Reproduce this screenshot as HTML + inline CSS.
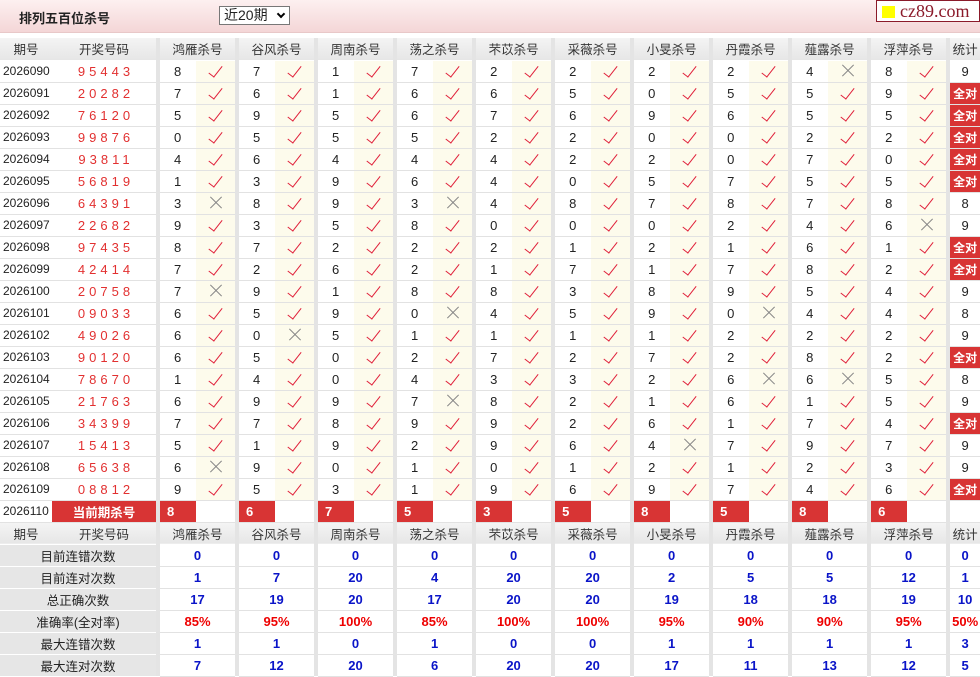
<!DOCTYPE html>
<html><head><meta charset="utf-8"><style>
*{margin:0;padding:0;box-sizing:border-box}
body{width:980px;height:675px;overflow:hidden;background:#fff;font-family:"Liberation Sans","Noto Sans CJK SC",sans-serif;color:#222;position:relative}
.top{position:absolute;left:0;top:0;width:980px;height:33px;background:linear-gradient(#fdf0f0,#f4d6d7);border-bottom:1px solid #e8c8c8}
.tt{position:absolute;left:19px;top:8px;font-size:13px;font-weight:bold;color:#222}
.sel{position:absolute;left:219px;top:6px;width:71px;height:19px;border:1px solid #777;background:#fff;font-size:14px;line-height:17px;padding-left:4px}
.sel b{position:absolute;right:5px;top:4px;width:6px;height:6px;border-right:2px solid #000;border-bottom:2px solid #000;transform:rotate(45deg)}
.logo{position:absolute;left:876px;top:0;width:104px;height:22px;border:1px solid #8b1a2a;background:#fff;font-family:"Liberation Serif",serif;color:#8b1a2a;font-size:18px;line-height:20px;padding-left:23px}
.logo:before{content:"";position:absolute;left:5px;top:5px;width:13px;height:12px;background:#ff0}
table{position:absolute;left:0;top:38px;border-collapse:collapse;table-layout:fixed;width:980px}
td{height:22px;border-bottom:1px solid #e2e2e2;font-size:12px;text-align:center;padding:0;white-space:nowrap;overflow:hidden}
tr.h td{background:linear-gradient(#f4f4f4,#e6e6e6);font-size:12.5px;color:#333;border-bottom:1px solid #fff}
td.g,tr.h td.g{background:#e4e4e4;border-bottom:none}
td.p{text-align:left;padding-left:3px}
td.r{color:#e23030;letter-spacing:4px;font-size:13px;padding-left:4px}
td.n{text-align:left;padding-left:14px;font-size:13px}
td.c{background:#fdfbec}
td.t{font-size:13px}
td.a{background:#d83434;color:#fff;font-weight:bold}
td.rn{background:#d83434;color:#fff;font-weight:bold;font-size:13px;text-align:left;padding-left:7px}
td.L{background:#e6e6e6;color:#222;font-size:12.5px;border-bottom:1px solid #fff}
td.v{color:#0a14c8;font-weight:bold;font-size:13px}
td.q{color:#e00;font-weight:bold;font-size:13px}
i.y{display:inline-block;width:7px;height:14px;border-right:1.7px solid #e0203a;border-bottom:1.7px solid #e0203a;transform:rotate(38deg);margin-top:-3px;vertical-align:middle}
i.x{display:inline-block;position:relative;width:14px;height:14px;vertical-align:middle}
i.x:before,i.x:after{content:"";position:absolute;left:-1px;top:6px;width:16px;height:1px;background:#888;transform:rotate(45deg)}
i.x:after{transform:rotate(-45deg)}
</style></head><body>
<div class="top"><div class="tt">排列五百位杀号</div><div class="sel">近20期<b></b></div><div class="logo">cz89.com</div></div>
<table>
<colgroup><col style="width:52px"><col style="width:104px"><col style="width:4px">
<col style="width:36px"><col style="width:39px"><col style="width:4px"><col style="width:36px"><col style="width:39px"><col style="width:4px">
<col style="width:36px"><col style="width:39px"><col style="width:4px"><col style="width:36px"><col style="width:39px"><col style="width:4px">
<col style="width:36px"><col style="width:39px"><col style="width:4px"><col style="width:36px"><col style="width:39px"><col style="width:4px">
<col style="width:36px"><col style="width:39px"><col style="width:4px"><col style="width:36px"><col style="width:39px"><col style="width:4px">
<col style="width:36px"><col style="width:39px"><col style="width:4px"><col style="width:36px"><col style="width:39px"><col style="width:4px">
<col style="width:30px"></colgroup>
<tr class="h"><td>期号</td><td>开奖号码</td><td class="g"></td><td colspan="2">鸿雁杀号</td><td class="g"></td><td colspan="2">谷风杀号</td><td class="g"></td><td colspan="2">周南杀号</td><td class="g"></td><td colspan="2">荡之杀号</td><td class="g"></td><td colspan="2">芣苡杀号</td><td class="g"></td><td colspan="2">采薇杀号</td><td class="g"></td><td colspan="2">小旻杀号</td><td class="g"></td><td colspan="2">丹霞杀号</td><td class="g"></td><td colspan="2">薤露杀号</td><td class="g"></td><td colspan="2">浮萍杀号</td><td class="g"></td><td>统计</td></tr>
<tr><td class="p">2026090</td><td class="r">95443</td><td class="g"></td><td class="n">8</td><td class="c"><i class="y"></i></td><td class="g"></td><td class="n">7</td><td class="c"><i class="y"></i></td><td class="g"></td><td class="n">1</td><td class="c"><i class="y"></i></td><td class="g"></td><td class="n">7</td><td class="c"><i class="y"></i></td><td class="g"></td><td class="n">2</td><td class="c"><i class="y"></i></td><td class="g"></td><td class="n">2</td><td class="c"><i class="y"></i></td><td class="g"></td><td class="n">2</td><td class="c"><i class="y"></i></td><td class="g"></td><td class="n">2</td><td class="c"><i class="y"></i></td><td class="g"></td><td class="n">4</td><td class="c"><i class="x"></i></td><td class="g"></td><td class="n">8</td><td class="c"><i class="y"></i></td><td class="g"></td><td class="t">9</td></tr>
<tr><td class="p">2026091</td><td class="r">20282</td><td class="g"></td><td class="n">7</td><td class="c"><i class="y"></i></td><td class="g"></td><td class="n">6</td><td class="c"><i class="y"></i></td><td class="g"></td><td class="n">1</td><td class="c"><i class="y"></i></td><td class="g"></td><td class="n">6</td><td class="c"><i class="y"></i></td><td class="g"></td><td class="n">6</td><td class="c"><i class="y"></i></td><td class="g"></td><td class="n">5</td><td class="c"><i class="y"></i></td><td class="g"></td><td class="n">0</td><td class="c"><i class="y"></i></td><td class="g"></td><td class="n">5</td><td class="c"><i class="y"></i></td><td class="g"></td><td class="n">5</td><td class="c"><i class="y"></i></td><td class="g"></td><td class="n">9</td><td class="c"><i class="y"></i></td><td class="g"></td><td class="a">全对</td></tr>
<tr><td class="p">2026092</td><td class="r">76120</td><td class="g"></td><td class="n">5</td><td class="c"><i class="y"></i></td><td class="g"></td><td class="n">9</td><td class="c"><i class="y"></i></td><td class="g"></td><td class="n">5</td><td class="c"><i class="y"></i></td><td class="g"></td><td class="n">6</td><td class="c"><i class="y"></i></td><td class="g"></td><td class="n">7</td><td class="c"><i class="y"></i></td><td class="g"></td><td class="n">6</td><td class="c"><i class="y"></i></td><td class="g"></td><td class="n">9</td><td class="c"><i class="y"></i></td><td class="g"></td><td class="n">6</td><td class="c"><i class="y"></i></td><td class="g"></td><td class="n">5</td><td class="c"><i class="y"></i></td><td class="g"></td><td class="n">5</td><td class="c"><i class="y"></i></td><td class="g"></td><td class="a">全对</td></tr>
<tr><td class="p">2026093</td><td class="r">99876</td><td class="g"></td><td class="n">0</td><td class="c"><i class="y"></i></td><td class="g"></td><td class="n">5</td><td class="c"><i class="y"></i></td><td class="g"></td><td class="n">5</td><td class="c"><i class="y"></i></td><td class="g"></td><td class="n">5</td><td class="c"><i class="y"></i></td><td class="g"></td><td class="n">2</td><td class="c"><i class="y"></i></td><td class="g"></td><td class="n">2</td><td class="c"><i class="y"></i></td><td class="g"></td><td class="n">0</td><td class="c"><i class="y"></i></td><td class="g"></td><td class="n">0</td><td class="c"><i class="y"></i></td><td class="g"></td><td class="n">2</td><td class="c"><i class="y"></i></td><td class="g"></td><td class="n">2</td><td class="c"><i class="y"></i></td><td class="g"></td><td class="a">全对</td></tr>
<tr><td class="p">2026094</td><td class="r">93811</td><td class="g"></td><td class="n">4</td><td class="c"><i class="y"></i></td><td class="g"></td><td class="n">6</td><td class="c"><i class="y"></i></td><td class="g"></td><td class="n">4</td><td class="c"><i class="y"></i></td><td class="g"></td><td class="n">4</td><td class="c"><i class="y"></i></td><td class="g"></td><td class="n">4</td><td class="c"><i class="y"></i></td><td class="g"></td><td class="n">2</td><td class="c"><i class="y"></i></td><td class="g"></td><td class="n">2</td><td class="c"><i class="y"></i></td><td class="g"></td><td class="n">0</td><td class="c"><i class="y"></i></td><td class="g"></td><td class="n">7</td><td class="c"><i class="y"></i></td><td class="g"></td><td class="n">0</td><td class="c"><i class="y"></i></td><td class="g"></td><td class="a">全对</td></tr>
<tr><td class="p">2026095</td><td class="r">56819</td><td class="g"></td><td class="n">1</td><td class="c"><i class="y"></i></td><td class="g"></td><td class="n">3</td><td class="c"><i class="y"></i></td><td class="g"></td><td class="n">9</td><td class="c"><i class="y"></i></td><td class="g"></td><td class="n">6</td><td class="c"><i class="y"></i></td><td class="g"></td><td class="n">4</td><td class="c"><i class="y"></i></td><td class="g"></td><td class="n">0</td><td class="c"><i class="y"></i></td><td class="g"></td><td class="n">5</td><td class="c"><i class="y"></i></td><td class="g"></td><td class="n">7</td><td class="c"><i class="y"></i></td><td class="g"></td><td class="n">5</td><td class="c"><i class="y"></i></td><td class="g"></td><td class="n">5</td><td class="c"><i class="y"></i></td><td class="g"></td><td class="a">全对</td></tr>
<tr><td class="p">2026096</td><td class="r">64391</td><td class="g"></td><td class="n">3</td><td class="c"><i class="x"></i></td><td class="g"></td><td class="n">8</td><td class="c"><i class="y"></i></td><td class="g"></td><td class="n">9</td><td class="c"><i class="y"></i></td><td class="g"></td><td class="n">3</td><td class="c"><i class="x"></i></td><td class="g"></td><td class="n">4</td><td class="c"><i class="y"></i></td><td class="g"></td><td class="n">8</td><td class="c"><i class="y"></i></td><td class="g"></td><td class="n">7</td><td class="c"><i class="y"></i></td><td class="g"></td><td class="n">8</td><td class="c"><i class="y"></i></td><td class="g"></td><td class="n">7</td><td class="c"><i class="y"></i></td><td class="g"></td><td class="n">8</td><td class="c"><i class="y"></i></td><td class="g"></td><td class="t">8</td></tr>
<tr><td class="p">2026097</td><td class="r">22682</td><td class="g"></td><td class="n">9</td><td class="c"><i class="y"></i></td><td class="g"></td><td class="n">3</td><td class="c"><i class="y"></i></td><td class="g"></td><td class="n">5</td><td class="c"><i class="y"></i></td><td class="g"></td><td class="n">8</td><td class="c"><i class="y"></i></td><td class="g"></td><td class="n">0</td><td class="c"><i class="y"></i></td><td class="g"></td><td class="n">0</td><td class="c"><i class="y"></i></td><td class="g"></td><td class="n">0</td><td class="c"><i class="y"></i></td><td class="g"></td><td class="n">2</td><td class="c"><i class="y"></i></td><td class="g"></td><td class="n">4</td><td class="c"><i class="y"></i></td><td class="g"></td><td class="n">6</td><td class="c"><i class="x"></i></td><td class="g"></td><td class="t">9</td></tr>
<tr><td class="p">2026098</td><td class="r">97435</td><td class="g"></td><td class="n">8</td><td class="c"><i class="y"></i></td><td class="g"></td><td class="n">7</td><td class="c"><i class="y"></i></td><td class="g"></td><td class="n">2</td><td class="c"><i class="y"></i></td><td class="g"></td><td class="n">2</td><td class="c"><i class="y"></i></td><td class="g"></td><td class="n">2</td><td class="c"><i class="y"></i></td><td class="g"></td><td class="n">1</td><td class="c"><i class="y"></i></td><td class="g"></td><td class="n">2</td><td class="c"><i class="y"></i></td><td class="g"></td><td class="n">1</td><td class="c"><i class="y"></i></td><td class="g"></td><td class="n">6</td><td class="c"><i class="y"></i></td><td class="g"></td><td class="n">1</td><td class="c"><i class="y"></i></td><td class="g"></td><td class="a">全对</td></tr>
<tr><td class="p">2026099</td><td class="r">42414</td><td class="g"></td><td class="n">7</td><td class="c"><i class="y"></i></td><td class="g"></td><td class="n">2</td><td class="c"><i class="y"></i></td><td class="g"></td><td class="n">6</td><td class="c"><i class="y"></i></td><td class="g"></td><td class="n">2</td><td class="c"><i class="y"></i></td><td class="g"></td><td class="n">1</td><td class="c"><i class="y"></i></td><td class="g"></td><td class="n">7</td><td class="c"><i class="y"></i></td><td class="g"></td><td class="n">1</td><td class="c"><i class="y"></i></td><td class="g"></td><td class="n">7</td><td class="c"><i class="y"></i></td><td class="g"></td><td class="n">8</td><td class="c"><i class="y"></i></td><td class="g"></td><td class="n">2</td><td class="c"><i class="y"></i></td><td class="g"></td><td class="a">全对</td></tr>
<tr><td class="p">2026100</td><td class="r">20758</td><td class="g"></td><td class="n">7</td><td class="c"><i class="x"></i></td><td class="g"></td><td class="n">9</td><td class="c"><i class="y"></i></td><td class="g"></td><td class="n">1</td><td class="c"><i class="y"></i></td><td class="g"></td><td class="n">8</td><td class="c"><i class="y"></i></td><td class="g"></td><td class="n">8</td><td class="c"><i class="y"></i></td><td class="g"></td><td class="n">3</td><td class="c"><i class="y"></i></td><td class="g"></td><td class="n">8</td><td class="c"><i class="y"></i></td><td class="g"></td><td class="n">9</td><td class="c"><i class="y"></i></td><td class="g"></td><td class="n">5</td><td class="c"><i class="y"></i></td><td class="g"></td><td class="n">4</td><td class="c"><i class="y"></i></td><td class="g"></td><td class="t">9</td></tr>
<tr><td class="p">2026101</td><td class="r">09033</td><td class="g"></td><td class="n">6</td><td class="c"><i class="y"></i></td><td class="g"></td><td class="n">5</td><td class="c"><i class="y"></i></td><td class="g"></td><td class="n">9</td><td class="c"><i class="y"></i></td><td class="g"></td><td class="n">0</td><td class="c"><i class="x"></i></td><td class="g"></td><td class="n">4</td><td class="c"><i class="y"></i></td><td class="g"></td><td class="n">5</td><td class="c"><i class="y"></i></td><td class="g"></td><td class="n">9</td><td class="c"><i class="y"></i></td><td class="g"></td><td class="n">0</td><td class="c"><i class="x"></i></td><td class="g"></td><td class="n">4</td><td class="c"><i class="y"></i></td><td class="g"></td><td class="n">4</td><td class="c"><i class="y"></i></td><td class="g"></td><td class="t">8</td></tr>
<tr><td class="p">2026102</td><td class="r">49026</td><td class="g"></td><td class="n">6</td><td class="c"><i class="y"></i></td><td class="g"></td><td class="n">0</td><td class="c"><i class="x"></i></td><td class="g"></td><td class="n">5</td><td class="c"><i class="y"></i></td><td class="g"></td><td class="n">1</td><td class="c"><i class="y"></i></td><td class="g"></td><td class="n">1</td><td class="c"><i class="y"></i></td><td class="g"></td><td class="n">1</td><td class="c"><i class="y"></i></td><td class="g"></td><td class="n">1</td><td class="c"><i class="y"></i></td><td class="g"></td><td class="n">2</td><td class="c"><i class="y"></i></td><td class="g"></td><td class="n">2</td><td class="c"><i class="y"></i></td><td class="g"></td><td class="n">2</td><td class="c"><i class="y"></i></td><td class="g"></td><td class="t">9</td></tr>
<tr><td class="p">2026103</td><td class="r">90120</td><td class="g"></td><td class="n">6</td><td class="c"><i class="y"></i></td><td class="g"></td><td class="n">5</td><td class="c"><i class="y"></i></td><td class="g"></td><td class="n">0</td><td class="c"><i class="y"></i></td><td class="g"></td><td class="n">2</td><td class="c"><i class="y"></i></td><td class="g"></td><td class="n">7</td><td class="c"><i class="y"></i></td><td class="g"></td><td class="n">2</td><td class="c"><i class="y"></i></td><td class="g"></td><td class="n">7</td><td class="c"><i class="y"></i></td><td class="g"></td><td class="n">2</td><td class="c"><i class="y"></i></td><td class="g"></td><td class="n">8</td><td class="c"><i class="y"></i></td><td class="g"></td><td class="n">2</td><td class="c"><i class="y"></i></td><td class="g"></td><td class="a">全对</td></tr>
<tr><td class="p">2026104</td><td class="r">78670</td><td class="g"></td><td class="n">1</td><td class="c"><i class="y"></i></td><td class="g"></td><td class="n">4</td><td class="c"><i class="y"></i></td><td class="g"></td><td class="n">0</td><td class="c"><i class="y"></i></td><td class="g"></td><td class="n">4</td><td class="c"><i class="y"></i></td><td class="g"></td><td class="n">3</td><td class="c"><i class="y"></i></td><td class="g"></td><td class="n">3</td><td class="c"><i class="y"></i></td><td class="g"></td><td class="n">2</td><td class="c"><i class="y"></i></td><td class="g"></td><td class="n">6</td><td class="c"><i class="x"></i></td><td class="g"></td><td class="n">6</td><td class="c"><i class="x"></i></td><td class="g"></td><td class="n">5</td><td class="c"><i class="y"></i></td><td class="g"></td><td class="t">8</td></tr>
<tr><td class="p">2026105</td><td class="r">21763</td><td class="g"></td><td class="n">6</td><td class="c"><i class="y"></i></td><td class="g"></td><td class="n">9</td><td class="c"><i class="y"></i></td><td class="g"></td><td class="n">9</td><td class="c"><i class="y"></i></td><td class="g"></td><td class="n">7</td><td class="c"><i class="x"></i></td><td class="g"></td><td class="n">8</td><td class="c"><i class="y"></i></td><td class="g"></td><td class="n">2</td><td class="c"><i class="y"></i></td><td class="g"></td><td class="n">1</td><td class="c"><i class="y"></i></td><td class="g"></td><td class="n">6</td><td class="c"><i class="y"></i></td><td class="g"></td><td class="n">1</td><td class="c"><i class="y"></i></td><td class="g"></td><td class="n">5</td><td class="c"><i class="y"></i></td><td class="g"></td><td class="t">9</td></tr>
<tr><td class="p">2026106</td><td class="r">34399</td><td class="g"></td><td class="n">7</td><td class="c"><i class="y"></i></td><td class="g"></td><td class="n">7</td><td class="c"><i class="y"></i></td><td class="g"></td><td class="n">8</td><td class="c"><i class="y"></i></td><td class="g"></td><td class="n">9</td><td class="c"><i class="y"></i></td><td class="g"></td><td class="n">9</td><td class="c"><i class="y"></i></td><td class="g"></td><td class="n">2</td><td class="c"><i class="y"></i></td><td class="g"></td><td class="n">6</td><td class="c"><i class="y"></i></td><td class="g"></td><td class="n">1</td><td class="c"><i class="y"></i></td><td class="g"></td><td class="n">7</td><td class="c"><i class="y"></i></td><td class="g"></td><td class="n">4</td><td class="c"><i class="y"></i></td><td class="g"></td><td class="a">全对</td></tr>
<tr><td class="p">2026107</td><td class="r">15413</td><td class="g"></td><td class="n">5</td><td class="c"><i class="y"></i></td><td class="g"></td><td class="n">1</td><td class="c"><i class="y"></i></td><td class="g"></td><td class="n">9</td><td class="c"><i class="y"></i></td><td class="g"></td><td class="n">2</td><td class="c"><i class="y"></i></td><td class="g"></td><td class="n">9</td><td class="c"><i class="y"></i></td><td class="g"></td><td class="n">6</td><td class="c"><i class="y"></i></td><td class="g"></td><td class="n">4</td><td class="c"><i class="x"></i></td><td class="g"></td><td class="n">7</td><td class="c"><i class="y"></i></td><td class="g"></td><td class="n">9</td><td class="c"><i class="y"></i></td><td class="g"></td><td class="n">7</td><td class="c"><i class="y"></i></td><td class="g"></td><td class="t">9</td></tr>
<tr><td class="p">2026108</td><td class="r">65638</td><td class="g"></td><td class="n">6</td><td class="c"><i class="x"></i></td><td class="g"></td><td class="n">9</td><td class="c"><i class="y"></i></td><td class="g"></td><td class="n">0</td><td class="c"><i class="y"></i></td><td class="g"></td><td class="n">1</td><td class="c"><i class="y"></i></td><td class="g"></td><td class="n">0</td><td class="c"><i class="y"></i></td><td class="g"></td><td class="n">1</td><td class="c"><i class="y"></i></td><td class="g"></td><td class="n">2</td><td class="c"><i class="y"></i></td><td class="g"></td><td class="n">1</td><td class="c"><i class="y"></i></td><td class="g"></td><td class="n">2</td><td class="c"><i class="y"></i></td><td class="g"></td><td class="n">3</td><td class="c"><i class="y"></i></td><td class="g"></td><td class="t">9</td></tr>
<tr><td class="p">2026109</td><td class="r">08812</td><td class="g"></td><td class="n">9</td><td class="c"><i class="y"></i></td><td class="g"></td><td class="n">5</td><td class="c"><i class="y"></i></td><td class="g"></td><td class="n">3</td><td class="c"><i class="y"></i></td><td class="g"></td><td class="n">1</td><td class="c"><i class="y"></i></td><td class="g"></td><td class="n">9</td><td class="c"><i class="y"></i></td><td class="g"></td><td class="n">6</td><td class="c"><i class="y"></i></td><td class="g"></td><td class="n">9</td><td class="c"><i class="y"></i></td><td class="g"></td><td class="n">7</td><td class="c"><i class="y"></i></td><td class="g"></td><td class="n">4</td><td class="c"><i class="y"></i></td><td class="g"></td><td class="n">6</td><td class="c"><i class="y"></i></td><td class="g"></td><td class="a">全对</td></tr>
<tr><td class="p">2026110</td><td class="a" style="font-size:12.5px">当前期杀号</td><td class="g"></td><td class="rn">8</td><td></td><td class="g"></td><td class="rn">6</td><td></td><td class="g"></td><td class="rn">7</td><td></td><td class="g"></td><td class="rn">5</td><td></td><td class="g"></td><td class="rn">3</td><td></td><td class="g"></td><td class="rn">5</td><td></td><td class="g"></td><td class="rn">8</td><td></td><td class="g"></td><td class="rn">5</td><td></td><td class="g"></td><td class="rn">8</td><td></td><td class="g"></td><td class="rn">6</td><td></td><td class="g"></td><td></td></tr>
<tr class="h"><td>期号</td><td>开奖号码</td><td class="g"></td><td colspan="2">鸿雁杀号</td><td class="g"></td><td colspan="2">谷风杀号</td><td class="g"></td><td colspan="2">周南杀号</td><td class="g"></td><td colspan="2">荡之杀号</td><td class="g"></td><td colspan="2">芣苡杀号</td><td class="g"></td><td colspan="2">采薇杀号</td><td class="g"></td><td colspan="2">小旻杀号</td><td class="g"></td><td colspan="2">丹霞杀号</td><td class="g"></td><td colspan="2">薤露杀号</td><td class="g"></td><td colspan="2">浮萍杀号</td><td class="g"></td><td>统计</td></tr>
<tr><td class="L" colspan="2">目前连错次数</td><td class="g"></td><td class="v" colspan="2">0</td><td class="g"></td><td class="v" colspan="2">0</td><td class="g"></td><td class="v" colspan="2">0</td><td class="g"></td><td class="v" colspan="2">0</td><td class="g"></td><td class="v" colspan="2">0</td><td class="g"></td><td class="v" colspan="2">0</td><td class="g"></td><td class="v" colspan="2">0</td><td class="g"></td><td class="v" colspan="2">0</td><td class="g"></td><td class="v" colspan="2">0</td><td class="g"></td><td class="v" colspan="2">0</td><td class="g"></td><td class="v">0</td></tr>
<tr><td class="L" colspan="2">目前连对次数</td><td class="g"></td><td class="v" colspan="2">1</td><td class="g"></td><td class="v" colspan="2">7</td><td class="g"></td><td class="v" colspan="2">20</td><td class="g"></td><td class="v" colspan="2">4</td><td class="g"></td><td class="v" colspan="2">20</td><td class="g"></td><td class="v" colspan="2">20</td><td class="g"></td><td class="v" colspan="2">2</td><td class="g"></td><td class="v" colspan="2">5</td><td class="g"></td><td class="v" colspan="2">5</td><td class="g"></td><td class="v" colspan="2">12</td><td class="g"></td><td class="v">1</td></tr>
<tr><td class="L" colspan="2">总正确次数</td><td class="g"></td><td class="v" colspan="2">17</td><td class="g"></td><td class="v" colspan="2">19</td><td class="g"></td><td class="v" colspan="2">20</td><td class="g"></td><td class="v" colspan="2">17</td><td class="g"></td><td class="v" colspan="2">20</td><td class="g"></td><td class="v" colspan="2">20</td><td class="g"></td><td class="v" colspan="2">19</td><td class="g"></td><td class="v" colspan="2">18</td><td class="g"></td><td class="v" colspan="2">18</td><td class="g"></td><td class="v" colspan="2">19</td><td class="g"></td><td class="v">10</td></tr>
<tr><td class="L" colspan="2">准确率(全对率)</td><td class="g"></td><td class="q" colspan="2">85%</td><td class="g"></td><td class="q" colspan="2">95%</td><td class="g"></td><td class="q" colspan="2">100%</td><td class="g"></td><td class="q" colspan="2">85%</td><td class="g"></td><td class="q" colspan="2">100%</td><td class="g"></td><td class="q" colspan="2">100%</td><td class="g"></td><td class="q" colspan="2">95%</td><td class="g"></td><td class="q" colspan="2">90%</td><td class="g"></td><td class="q" colspan="2">90%</td><td class="g"></td><td class="q" colspan="2">95%</td><td class="g"></td><td class="q">50%</td></tr>
<tr><td class="L" colspan="2">最大连错次数</td><td class="g"></td><td class="v" colspan="2">1</td><td class="g"></td><td class="v" colspan="2">1</td><td class="g"></td><td class="v" colspan="2">0</td><td class="g"></td><td class="v" colspan="2">1</td><td class="g"></td><td class="v" colspan="2">0</td><td class="g"></td><td class="v" colspan="2">0</td><td class="g"></td><td class="v" colspan="2">1</td><td class="g"></td><td class="v" colspan="2">1</td><td class="g"></td><td class="v" colspan="2">1</td><td class="g"></td><td class="v" colspan="2">1</td><td class="g"></td><td class="v">3</td></tr>
<tr><td class="L" colspan="2">最大连对次数</td><td class="g"></td><td class="v" colspan="2">7</td><td class="g"></td><td class="v" colspan="2">12</td><td class="g"></td><td class="v" colspan="2">20</td><td class="g"></td><td class="v" colspan="2">6</td><td class="g"></td><td class="v" colspan="2">20</td><td class="g"></td><td class="v" colspan="2">20</td><td class="g"></td><td class="v" colspan="2">17</td><td class="g"></td><td class="v" colspan="2">11</td><td class="g"></td><td class="v" colspan="2">13</td><td class="g"></td><td class="v" colspan="2">12</td><td class="g"></td><td class="v">5</td></tr>
</table>
</body></html>
